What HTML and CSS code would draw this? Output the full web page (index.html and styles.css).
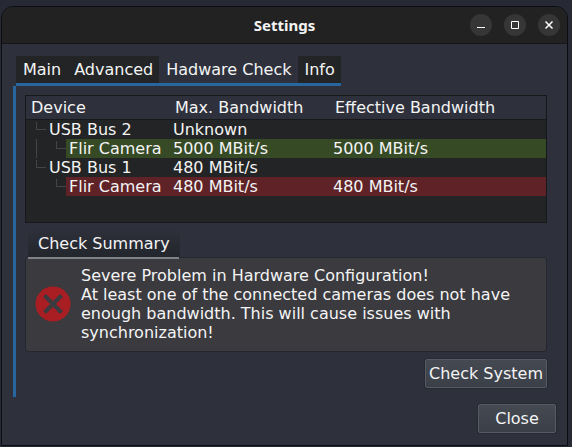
FILE: index.html
```html
<!DOCTYPE html>
<html lang="en">
<head>
<meta charset="utf-8">
<title>Settings</title>
<link rel="stylesheet" href="styles.css">
</head>
<body>
<div class="window">
  <header class="titlebar">
    <h1 class="title">Settings</h1>
    <div class="controls">
      <button class="control" type="button" aria-label="Minimize"><svg viewBox="0 0 22 22"><path d="M7 13.500h8"/></svg></button>
      <button class="control" type="button" aria-label="Maximize"><svg viewBox="0 0 22 22"><path d="M7.500 7.500h7v7h-7z"/></svg></button>
      <button class="control" type="button" aria-label="Close window"><svg viewBox="0 0 22 22"><path class="thick" d="M7.500 7.500l7 7M14.500 7.500l-7 7"/></svg></button>
    </div>
  </header>
  <main class="content">
    <div class="tabs" role="tablist">
      <button class="tab" type="button" role="tab">Main</button>
      <button class="tab" type="button" role="tab">Advanced</button>
      <button class="tab active" type="button" role="tab" aria-selected="true">Hadware Check</button>
      <button class="tab" type="button" role="tab">Info</button>
    </div>
    <section class="pane">
      <div class="tree">
        <table class="devices">
          <colgroup><col class="col-device"><col class="col-max"><col></colgroup>
          <thead>
            <tr><th>Device</th><th>Max. Bandwidth</th><th>Effective Bandwidth</th></tr>
          </thead>
          <tbody>
            <tr>
              <td class="node"><div class="branch"><i class="elbow"></i><span class="name">USB Bus 2</span></div></td>
              <td>Unknown</td><td></td>
            </tr>
            <tr class="ok">
              <td class="node"><div class="branch"><i class="line"></i><i class="elbow"></i><span class="name">Flir Camera</span></div></td>
              <td>5000 MBit/s</td><td>5000 MBit/s</td>
            </tr>
            <tr>
              <td class="node"><div class="branch"><i class="elbow"></i><span class="name">USB Bus 1</span></div></td>
              <td>480 MBit/s</td><td></td>
            </tr>
            <tr class="bad">
              <td class="node"><div class="branch"><i class="blank"></i><i class="elbow"></i><span class="name">Flir Camera</span></div></td>
              <td>480 MBit/s</td><td>480 MBit/s</td>
            </tr>
          </tbody>
        </table>
      </div>
      <h2 class="group-title">Check Summary</h2>
      <div class="summary">
        <svg class="error" viewBox="0 0 36 36" aria-hidden="true"><circle cx="18" cy="18" r="17.500"/><path d="M9.500 9.500l17 17M26.500 9.500l-17 17"/></svg>
        <p class="message">Severe Problem in Hardware Configuration!<br>At least one of the connected cameras does not have enough bandwidth. This will cause issues with synchronization!</p>
      </div>
      <button class="button" type="button">Check System</button>
    </section>
    <footer class="actions"><button class="button close" type="button">Close</button></footer>
  </main>
</div>
</body>
</html>
```
FILE: styles.css
```css
* { box-sizing: border-box; }

body {
  margin: 0;
  padding: 6px 4px 2px 1px;
  min-height: 100vh;
  display: flex;
  background: #272a35;
  color: #f4f4f4;
  font: 16px/19px "DejaVu Sans", sans-serif;
}

button { font: inherit; color: inherit; }

.window {
  flex: 1;
  display: flex;
  flex-direction: column;
  border: 1px solid #0c0d12;
  border-radius: 12px 12px 0 0;
  background: #2e313c;
  overflow: hidden;
}

.titlebar {
  display: grid;
  grid-template-columns: 1fr auto 1fr;
  align-items: center;
  height: 37px;
  padding: 0 7px;
  background: #222222;
  border-bottom: 1px solid #15161a;
}

.title {
  grid-column: 2;
  margin: 0;
  font: bold 15px/19px "Noto Sans", sans-serif;
}

.controls {
  display: flex;
  justify-content: flex-end;
  gap: 12px;
}

.control {
  width: 22px;
  height: 22px;
  padding: 0;
  border: 0;
  border-radius: 50%;
  background: #363636;
}

.control svg {
  display: block;
  fill: none;
  stroke: #ffffff;
}

.control .thick { stroke-width: 1.5; }

.content {
  flex: 1;
  display: flex;
  flex-direction: column;
  padding: 12px 11px;
}

.tabs {
  display: flex;
  align-self: flex-start;
  margin-left: 3px;
  border-bottom: 3px solid #2866a0;
}

.tab {
  height: 27px;
  padding: 0 6px 0 7px;
  border: 0;
  background: #222426;
}

.tab.active { background: #2e313c; }

.pane {
  flex: 1;
  display: flex;
  flex-direction: column;
  padding: 9px;
  border-left: 3px solid #2866a0;
}

.tree {
  min-height: 128px;
  border: 1px solid #17181c;
  background: #222426;
}

.devices {
  width: 100%;
  table-layout: fixed;
  border-collapse: separate;
  border-spacing: 0;
}

.col-device { width: 144px; }
.col-max { width: 160px; }

.devices th {
  height: 24px;
  padding: 0 5px;
  border-bottom: 1px solid #17181c;
  background: #2e313c;
  font-weight: normal;
  text-align: left;
}

.devices td {
  height: 19px;
  padding: 0 3px;
}

.devices .node { padding: 0; }
.branch { display: flex; height: 19px; }
.name { flex: 1; padding-left: 3px; }

.ok td:not(.node), .ok .name { background: #354a25; }
.bad td:not(.node), .bad .name { background: #5e2227; }

.line, .elbow, .blank { width: 20px; }
.elbow { padding-top: 2px; }

.line::before, .elbow::before {
  content: "";
  display: block;
  margin-left: 10px;
  height: 100%;
  border-left: 1px solid #434547;
}

.elbow::before {
  height: 7px;
  border-bottom: 1px solid #434547;
}

.group-title {
  align-self: flex-start;
  margin: 7px 0 0 3px;
  padding: 4px 10px;
  font: inherit;
  background: linear-gradient(#2d3039, #24262d);
  border-radius: 3px 3px 0 0;
}

.summary {
  display: flex;
  align-items: center;
  gap: 10px;
  padding: 8px 9px 9px;
  border: 1px solid #25272e;
  border-radius: 3px;
  background: #3a3a3f;
  position: relative;
}

.summary::before {
  content: "";
  position: absolute;
  top: -1px;
  left: 2px;
  width: 151px;
  height: 2px;
  background: #808285;
}

.error { flex: none; width: 36px; height: 36px; }
.error circle { fill: #a91e22; }
.error path { stroke: #3a3a3f; stroke-width: 4; }
.message { margin: 0; }

.button {
  align-self: flex-end;
  height: 29px;
  margin-top: 7px;
  padding: 0 3px;
  border: 1px solid #565a63;
  border-radius: 2px;
  background: linear-gradient(#454952, #3b3f48);
  box-shadow: 0 0 0 1px #272a32;
}

.actions {
  display: flex;
  justify-content: flex-end;
}

.close { min-width: 78px; }
```
